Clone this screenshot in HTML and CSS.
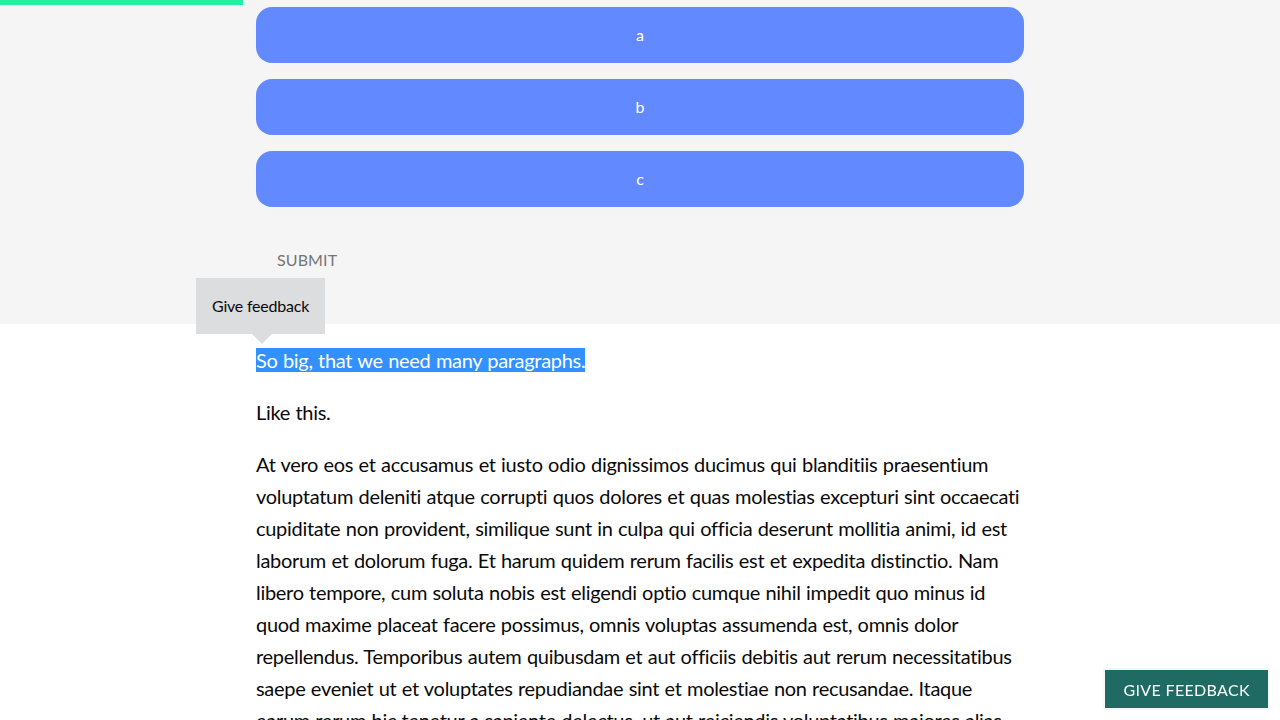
FILE: index.html
```html
<!DOCTYPE html>
<html>
<head>
<meta charset="utf-8">
<link rel="stylesheet" href="styles.css">
</head>
<body>
<div class="progress"></div>
<section class="quiz">
  <div class="inner">
    <div class="options">
      <button class="option">a</button>
      <button class="option">b</button>
      <button class="option">c</button>
    </div>
    <button class="submit">SUBMIT</button>
  </div>
</section>
<main class="content">
  <div class="tooltip">Give feedback</div>
  <p><span class="highlight">So big, that we need many paragraphs.</span></p>
  <p>Like this.</p>
  <p>At vero eos et accusamus et iusto odio dignissimos ducimus qui blanditiis praesentium voluptatum deleniti atque corrupti quos dolores et quas molestias excepturi sint occaecati cupiditate non provident, similique sunt in culpa qui officia deserunt mollitia animi, id est laborum et dolorum fuga. Et harum quidem rerum facilis est et expedita distinctio. Nam libero tempore, cum soluta nobis est eligendi optio cumque nihil impedit quo minus id quod maxime placeat facere possimus, omnis voluptas assumenda est, omnis dolor repellendus. Temporibus autem quibusdam et aut officiis debitis aut rerum necessitatibus saepe eveniet ut et voluptates repudiandae sint et molestiae non recusandae. Itaque earum rerum hic tenetur a sapiente delectus, ut aut reiciendis voluptatibus maiores alias consequatur aut perferendis doloribus asperiores repellat.</p>
</main>
<button class="feedback">GIVE FEEDBACK</button>
</body>
</html>
```
FILE: styles.css
```css
html, body {
  margin: 0;
  padding: 0;
  background: #ffffff;
  font-family: Lato, "Liberation Sans", sans-serif;
  color: #0a0a0a;
  font-variant-ligatures: none;
}
.progress {
  position: absolute;
  top: 0;
  left: 0;
  width: 243px;
  height: 5px;
  background: #22f0a0;
}
.quiz {
  background: #f5f5f5;
  height: 324px;
  box-sizing: border-box;
  padding-top: 7px;
}
.inner {
  width: 768px;
  margin: 0 auto;
}
.options {
  display: flex;
  flex-direction: column;
  gap: 16px;
}
.option {
  height: 56px;
  border: none;
  border-radius: 16px;
  background: #6289ff;
  color: #ffffff;
  font-family: Lato, "Liberation Sans", sans-serif;
  font-size: 16px;
  line-height: 16px;
  padding: 0;
}
.submit {
  margin-top: 34px;
  margin-left: 5px;
  height: 36px;
  padding: 0 16px;
  border: none;
  background: transparent;
  color: #757575;
  font-family: Lato, "Liberation Sans", sans-serif;
  font-size: 16px;
  letter-spacing: 0.1px;
}
.content {
  position: relative;
  width: 768px;
  margin: 0 auto;
  padding-top: 20px;
  font-size: 20px;
  line-height: 32px;
  letter-spacing: -0.3px;
  word-spacing: 0.6px;
}
.content p {
  margin: 0 0 20px 0;
}
.highlight {
  background: #3390ff;
  color: #ffffff;
}
.tooltip {
  position: absolute;
  left: -60px;
  top: -46px;
  height: 56px;
  line-height: 56px;
  padding: 0 16px;
  background: #dcdddf;
  color: #0a0a0a;
  font-size: 16px;
  letter-spacing: -0.22px;
  word-spacing: 0;
}
.tooltip::after {
  content: "";
  position: absolute;
  left: 56px;
  top: 56px;
  border-left: 10px solid transparent;
  border-right: 10px solid transparent;
  border-top: 10px solid #dcdddf;
}
.feedback {
  position: fixed;
  right: 12px;
  bottom: 12px;
  height: 38px;
  padding: 0 18px;
  border: none;
  background: #1f6b63;
  color: #ffffff;
  font-family: Lato, "Liberation Sans", sans-serif;
  font-size: 16px;
  letter-spacing: 0.35px;
  box-shadow: 0 0 0 2px #f4f8f7;
}
```
